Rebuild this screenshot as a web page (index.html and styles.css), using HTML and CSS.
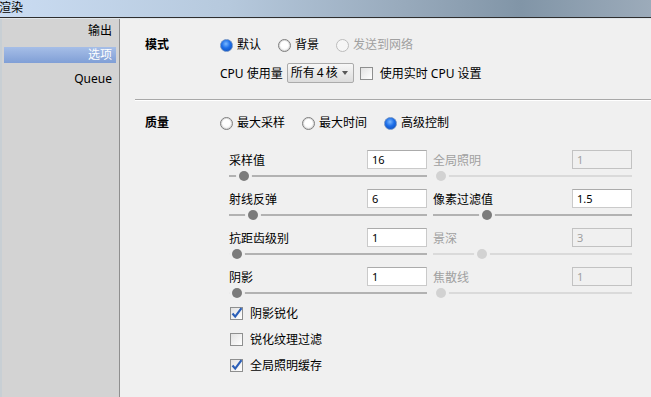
FILE: index.html
```html
<!DOCTYPE html>
<html lang="zh">

<head>
    <meta charset="UTF-8">
    <title>渲染</title>
    <link rel="stylesheet" href="styles.css">
</head>

<body>
    <div class="titlebar">渲染</div>

    <div class="window">
        <div class="sidebar">
            <div class="nav-item">输出</div>
            <div class="nav-item selected">选项</div>
            <div class="nav-item">Queue</div>
        </div>

        <div class="main">
            <!-- 模式 -->
            <div class="section">
                <div class="section-title">模式</div>
                <div class="section-body">
                    <div class="radio-row">
                        <span class="radio checked"><span class="dot"></span>默认</span>
                        <span class="radio"><span class="dot"></span>背景</span>
                        <span class="radio disabled"><span class="dot"></span>发送到网络</span>
                    </div>
                    <div class="cpu-row">
                        <span class="cpu-label">CPU 使用量</span>
                        <span class="select"><span class="select-text">所有 4 核</span><span class="arrow"></span></span>
                        <span class="check"><span class="box"></span>使用实时 CPU 设置</span>
                    </div>
                </div>
            </div>

            <div class="separator"></div>

            <!-- 质量 -->
            <div class="section quality">
                <div class="section-title">质量</div>
                <div class="section-body">
                    <div class="radio-row">
                        <span class="radio"><span class="dot"></span>最大采样</span>
                        <span class="radio"><span class="dot"></span>最大时间</span>
                        <span class="radio checked"><span class="dot"></span>高级控制</span>
                    </div>

                    <div class="params">
                        <div class="param">
                            <div class="param-head"><span>采样值</span><span class="field">16</span></div>
                            <div class="slider"><span class="thumb" style="left: 7.8%"></span></div>
                        </div>
                        <div class="param disabled">
                            <div class="param-head"><span>全局照明</span><span class="field">1</span></div>
                            <div class="slider"><span class="thumb" style="left: 4%"></span></div>
                        </div>
                        <div class="param">
                            <div class="param-head"><span>射线反弹</span><span class="field">6</span></div>
                            <div class="slider"><span class="thumb" style="left: 11.9%"></span></div>
                        </div>
                        <div class="param">
                            <div class="param-head"><span>像素过滤值</span><span class="field">1.5</span></div>
                            <div class="slider"><span class="thumb" style="left: 27.1%"></span></div>
                        </div>
                        <div class="param">
                            <div class="param-head"><span>抗距齿级别</span><span class="field">1</span></div>
                            <div class="slider"><span class="thumb" style="left: 4%"></span></div>
                        </div>
                        <div class="param disabled">
                            <div class="param-head"><span>景深</span><span class="field">3</span></div>
                            <div class="slider"><span class="thumb" style="left: 24.6%"></span></div>
                        </div>
                        <div class="param">
                            <div class="param-head"><span>阴影</span><span class="field">1</span></div>
                            <div class="slider"><span class="thumb" style="left: 4%"></span></div>
                        </div>
                        <div class="param disabled">
                            <div class="param-head"><span>焦散线</span><span class="field">1</span></div>
                            <div class="slider"><span class="thumb" style="left: 4%"></span></div>
                        </div>
                    </div>

                    <div class="checks">
                        <span class="check checked"><span class="box"><svg viewBox="0 0 13 13" width="13" height="13"><path d="M2.5 6.5 L5.2 9.6 L11.5 1.2" fill="none" stroke="#2b5fb8" stroke-width="2.2"/></svg></span>阴影锐化</span>
                        <span class="check"><span class="box"></span>锐化纹理过滤</span>
                        <span class="check checked"><span class="box"><svg viewBox="0 0 13 13" width="13" height="13"><path d="M2.5 6.5 L5.2 9.6 L11.5 1.2" fill="none" stroke="#2b5fb8" stroke-width="2.2"/></svg></span>全局照明缓存</span>
                    </div>
                </div>
            </div>
        </div>
    </div>
</body>

</html>
```

FILE: styles.css
```css
* {
    box-sizing: border-box;
}

body {
    margin: 0;
    width: 651px;
    height: 397px;
    overflow: hidden;
    background: #f0f0f0;
    color: #000;
    font-family: "Noto Sans", "Noto Sans CJK SC", sans-serif;
    font-size: 12px;
}

.titlebar {
    height: 18px;
    line-height: 16px;
    text-indent: -1px;
    border-bottom: 1px solid #2e2e2e;
    background: linear-gradient(to right, #cadcf2 0%, #b6c9dd 35%, #98aabc 62%, #8195a7 80%, #9cabba 100%);
}

.window {
    display: flex;
    height: 379px;
    border-top: 1px solid #e1e6ea;
}

/* left navigation */
.sidebar {
    width: 120px;
    display: flex;
    flex-direction: column;
    gap: 8px;
    padding-top: 4px;
    background: #d3d3d3;
    border-left: 2px solid #c8cfd4;
    border-right: 1px solid #8f8f8f;
}

.nav-item {
    height: 16px;
    line-height: 16px;
    margin: 0 3px 0 2px;
    padding-right: 4px;
    text-align: right;
}

.nav-item.selected {
    color: #fff;
    background: linear-gradient(#a6bee7, #809fd6);
}

/* main panel */
.main {
    flex: 1;
    padding-top: 18px;
}

.section {
    display: flex;
    padding-left: 25px;
}

.section.quality {
    margin-top: 14px;
}

.section-title {
    width: 75px;
    height: 16px;
    line-height: 16px;
    font-weight: bold;
}

.section-body {
    flex: 1;
    padding-right: 19px;
}

.radio-row {
    display: flex;
    gap: 17px;
    height: 16px;
    align-items: center;
}

.radio {
    display: inline-flex;
    align-items: center;
    gap: 4px;
    line-height: 16px;
}

.radio .dot {
    width: 13px;
    height: 13px;
    border-radius: 50%;
    border: 1px solid #7e7e7e;
    background: radial-gradient(circle at 50% 40%, #ffffff 40%, #e4e4e4 100%);
    box-shadow: inset 0 0 0 1px #dadada;
}

.radio.checked .dot {
    border-color: #6a8fc6;
    background: radial-gradient(circle at 45% 35%, #7ab8ff 0%, #1d6ee8 45%, #0b49b4 100%);
    box-shadow: none;
}

.radio.disabled {
    color: #a0a0a0;
}

.radio.disabled .dot {
    border-color: #bcbcbc;
    background: #f6f6f6;
    box-shadow: none;
}

.cpu-row {
    display: flex;
    align-items: center;
    height: 20px;
    margin-top: 10px;
}

.cpu-label {
    margin-right: 4px;
    white-space: nowrap;
}

.select {
    display: flex;
    align-items: center;
    width: 67px;
    height: 20px;
    padding: 0 5px 0 3px;
    margin-right: 6px;
    border: 1px solid #ababab;
    border-radius: 2px;
    background: linear-gradient(#f7f7f7, #dcdcdc);
    white-space: nowrap;
}

.select-text {
    line-height: 18px;
    word-spacing: -1px;
}

.select .arrow {
    flex-shrink: 0;
    margin-left: auto;
    border-top: 4px solid #585858;
    border-left: 3.5px solid transparent;
    border-right: 3.5px solid transparent;
}

.check {
    display: flex;
    align-items: center;
    gap: 7px;
    height: 16px;
    white-space: nowrap;
}

.check .box {
    width: 13px;
    height: 13px;
    border: 1px solid #8e8f8f;
    background: linear-gradient(135deg, #e2e2e2, #ffffff);
    display: flex;
}

.check .box svg {
    margin: -1px;
    overflow: visible;
}

.separator {
    margin: 16px 0 0 15px;
    height: 2px;
    border-top: 1px solid #a8a8a8;
    border-bottom: 1px solid #ffffff;
}

/* sliders grid */
.params {
    display: grid;
    grid-template-columns: 198px 199px;
    column-gap: 6px;
    row-gap: 6px;
    margin-top: 19px;
    padding-left: 9px;
}

.param-head {
    display: flex;
    justify-content: space-between;
    align-items: center;
    height: 19px;
}

.field {
    width: 60px;
    height: 19px;
    line-height: 17px;
    padding-left: 4px;
    font-size: 11px;
    background: #fff;
    border: 1px solid #cacaca;
    border-top-color: #ababab;
}

.slider {
    position: relative;
    height: 14px;
}

.slider::before {
    content: "";
    position: absolute;
    left: 0;
    right: 0;
    top: 6px;
    height: 2px;
    background: #b2b2b2;
}

.thumb {
    position: absolute;
    top: 2px;
    width: 10px;
    height: 10px;
    border-radius: 50%;
    background: #7b7b7b;
    transform: translateX(-50%);
    box-shadow: 0 0 0 3px #f0f0f0;
}

.param.disabled {
    color: #a0a0a0;
}

.param.disabled .field {
    background: #f0f0f0;
    border-color: #c2c2c2;
}

.param.disabled .slider::before {
    background: #dadada;
}

.param.disabled .thumb {
    background: #d2d2d2;
}

.checks {
    display: flex;
    flex-direction: column;
    gap: 10px;
    margin-top: 5px;
    padding-left: 10px;
}
```
